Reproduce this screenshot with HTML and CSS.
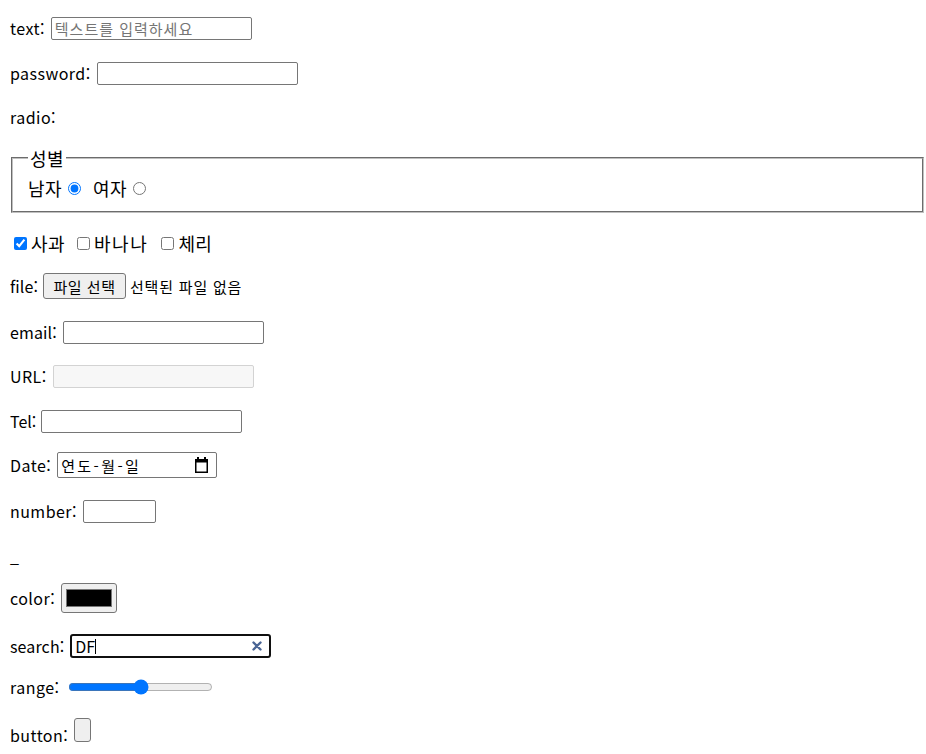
FILE: index.html
```html
<!DOCTYPE html>
<html lang="ko">
<head>
<meta charset="utf-8">
<title>Form</title>
<link rel="stylesheet" href="styles.css">
</head>
<body>
<form class="page">
  <div class="row h44 first"><span class="lbl">text:</span><input class="field ph" type="text" placeholder="텍스트를 입력하세요"></div>
  <div class="row h46"><span class="lbl">password:</span><input class="field" type="password"></div>
  <div class="row h42"><span class="lbl">radio:</span></div>
  <fieldset class="gender">
    <legend class="ko">성별</legend>
    <div class="opts">
      <span class="ko">남자</span><input class="rad" type="radio" name="gender" checked>
      <span class="ko">여자</span><input class="rad" type="radio" name="gender">
    </div>
  </fieldset>
  <div class="row h42 checks">
    <label class="chk-item"><input class="chk" type="checkbox" checked><span class="ko">사과</span></label>
    <label class="chk-item"><input class="chk" type="checkbox"><span class="ko wide">바나나</span></label>
    <label class="chk-item"><input class="chk" type="checkbox"><span class="ko">체리</span></label>
  </div>
  <div class="row h44"><span class="lbl snug">file:</span><span class="file"><button type="button" class="file-btn">파일 선택</button><span class="file-name">선택된 파일 없음</span></span></div>
  <div class="row h48"><span class="lbl close">email:</span><input class="field" type="email"></div>
  <div class="row h40"><span class="lbl">URL:</span><input class="field" type="url" disabled></div>
  <div class="row h50"><span class="lbl tight">Tel:</span><input class="field" type="tel"></div>
  <div class="row h38"><span class="lbl">Date:</span><span class="date"><span class="date-text">연도-월-일</span><svg class="cal" width="15" height="16" viewBox="0 0 15 16"><path d="M3 0h2v3H3zM10 0h2v3h-2z" fill="#000"/><path fill-rule="evenodd" fill="#000" d="M1 2h13v14H1z M2.5 5.5h10v9h-10z"/></svg></span></div>
  <div class="row h54"><span class="lbl">number:</span><input class="field num" type="number"></div>
  <div class="row h36"><span class="lbl">_</span></div>
  <div class="row h48"><span class="lbl">color:</span><input class="color" type="color" value="#000000"></div>
  <div class="row h48"><span class="lbl close">search:</span><span class="search"><span class="search-text">DF</span><span class="caret"></span><svg class="clear" width="10" height="10" viewBox="0 0 10 10"><path d="M1.5 1.5l7 7M8.5 1.5l-7 7" stroke="#4a6595" stroke-width="2.4" stroke-linecap="round"/></svg></span></div>
  <div class="row h34"><span class="lbl">range:</span><input class="range" type="range"></div>
  <div class="row h46 btn-row"><span class="lbl low">button:</span><button type="button" class="empty-btn"></button></div>
</form>
</body>
</html>
```
FILE: styles.css
```css
html, body {
  margin: 0;
  padding: 0;
  background: #fff;
}
body {
  font-family: "Noto Sans CJK KR", "Noto Sans", sans-serif;
  font-size: 16px;
  color: #000;
  overflow: hidden;
}
.page {
  display: flex;
  flex-direction: column;
  padding: 0 0 0 10px;
}
.row {
  display: flex;
  align-items: center;
  gap: 6px;
}
.first { margin-top: 6px; }
.h34 { height: 34px; }
.h36 { height: 36px; }
.h38 { height: 38px; }
.h40 { height: 40px; }
.h42 { height: 42px; }
.h44 { height: 44px; }
.h46 { height: 46px; }
.h48 { height: 48px; }
.h50 { height: 50px; }
.h54 { height: 54px; }
.lbl {
  line-height: 20px;
  letter-spacing: 0.45px;
}
.lbl.tight {
  letter-spacing: 0;
  margin-right: -1px;
}
.lbl.snug {
  letter-spacing: 0.1px;
  margin-right: -1px;
}
.lbl.close {
  letter-spacing: 0.12px;
}
.ko {
  font-size: 18px;
  letter-spacing: 0.4px;
  line-height: 22px;
}
.ko.wide {
  letter-spacing: 1.6px;
}
.field {
  box-sizing: border-box;
  width: 201px;
  height: 23px;
  margin: 0;
  padding: 1px 3px;
  border: 1px solid #767676;
  border-radius: 2px;
  font-family: "Noto Sans CJK KR", sans-serif;
  font-size: 13.33px;
  background: #fff;
}
.field.ph {
  font-size: 15px;
  letter-spacing: 1px;
  padding: 0 3px;
}
.field::placeholder {
  color: #757575;
}
.field:disabled {
  background: #f7f7f7;
  border-color: #d3d3d3;
}
.field.num {
  width: 73px;
}
.gender {
  margin: 9px 2px 0 1px;
  padding: 5px 12px 9px 15px;
  border: 2px groove #c0c0c0;
}
.gender legend {
  padding: 0 2px;
}
.opts {
  display: flex;
  align-items: center;
  height: 28px;
}
.rad {
  margin: 0 12px 0 6px;
  width: 13px;
  height: 13px;
}
.checks {
  margin-top: 9px;
  gap: 12px;
}
.chk-item {
  display: flex;
  align-items: center;
  gap: 4px;
}
.chk {
  margin: 0;
  width: 13px;
  height: 13px;
}
.chk-item:first-child {
  margin-left: 4px;
}
.chk-item:nth-child(3) {
  margin-left: 1px;
}
.file {
  display: flex;
  align-items: center;
  gap: 4px;
}
.file-btn {
  box-sizing: border-box;
  width: 83px;
  height: 26px;
  margin: 0;
  padding: 0;
  border: 1px solid #767676;
  border-radius: 3px;
  background: #efefef;
  font-family: "Noto Sans CJK KR", sans-serif;
  font-size: 15px;
  letter-spacing: 0.5px;
  color: #000;
}
.file-name {
  font-size: 15px;
  letter-spacing: 0.8px;
}
.date {
  box-sizing: border-box;
  width: 160px;
  height: 26px;
  display: flex;
  align-items: center;
  justify-content: space-between;
  padding: 0 7px 0 3px;
  border: 1px solid #767676;
  border-radius: 2px;
}
.date-text {
  font-size: 15px;
  letter-spacing: 2.4px;
}
.color {
  box-sizing: border-box;
  width: 56px;
  height: 30px;
  margin: 0;
  padding: 0;
  border: 1px solid #767676;
  border-radius: 3px;
  background: #efefef;
}
.color::-webkit-color-swatch-wrapper {
  padding: 5px 4px;
}
.color::-webkit-color-swatch {
  border: 1px solid #777;
  border-radius: 0;
}
.search {
  box-sizing: border-box;
  width: 201px;
  height: 24px;
  display: flex;
  align-items: center;
  padding: 0 7px 0 3px;
  border: 2px solid #101010;
  border-radius: 3px;
}
.search-text {
  font-size: 16px;
  line-height: 18px;
}
.caret {
  width: 1px;
  height: 15px;
  background: #000;
}
.clear {
  margin-left: auto;
}
.range {
  width: 145px;
  margin: 0 0 0 3px;
}
.btn-row {
  align-items: flex-start;
}
.low {
  margin-top: 21px;
}
.empty-btn {
  box-sizing: border-box;
  width: 17px;
  height: 24px;
  margin: 14px 0 0 0;
  padding: 0;
  border: 1px solid #767676;
  border-radius: 3px;
  background: #efefef;
}
```
